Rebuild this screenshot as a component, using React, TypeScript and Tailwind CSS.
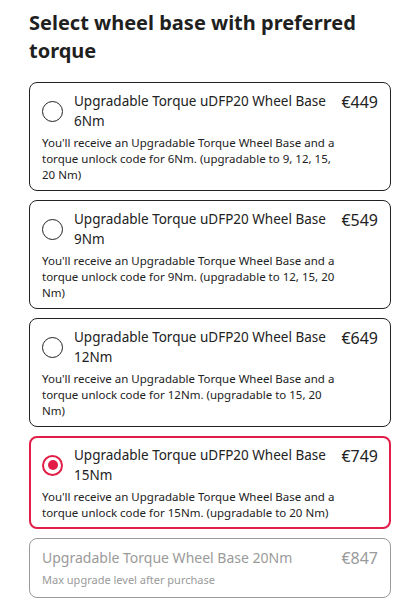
import { useState } from 'react';

interface Option {
  id: string;
  title: string;
  price: string;
  description: string;
  disabled?: boolean;
}

const options: Option[] = [
  {
    id: '6',
    title: 'Upgradable Torque uDFP20 Wheel Base 6Nm',
    price: '€449',
    description: "You'll receive an Upgradable Torque Wheel Base and a torque unlock code for 6Nm. (upgradable to 9, 12, 15, 20 Nm)",
  },
  {
    id: '9',
    title: 'Upgradable Torque uDFP20 Wheel Base 9Nm',
    price: '€549',
    description: "You'll receive an Upgradable Torque Wheel Base and a torque unlock code for 9Nm. (upgradable to 12, 15, 20 Nm)",
  },
  {
    id: '12',
    title: 'Upgradable Torque uDFP20 Wheel Base 12Nm',
    price: '€649',
    description: "You'll receive an Upgradable Torque Wheel Base and a torque unlock code for 12Nm. (upgradable to 15, 20 Nm)",
  },
  {
    id: '15',
    title: 'Upgradable Torque uDFP20 Wheel Base 15Nm',
    price: '€749',
    description: "You'll receive an Upgradable Torque Wheel Base and a torque unlock code for 15Nm. (upgradable to 20 Nm)",
  },
  {
    id: '20',
    title: 'Upgradable Torque Wheel Base 20Nm',
    price: '€847',
    description: 'Max upgrade level after purchase',
    disabled: true,
  },
];

export default function App() {
  const [selected, setSelected] = useState('15');

  return (
    <div className="bg-white min-h-screen pl-[29px] pr-[24px] pt-[9px] pb-4 text-[#222] font-['Noto_Sans',sans-serif]">
      <h1 className="text-[20px] leading-[28px] font-bold text-[#1f1f1f]">
        Select wheel base with preferred torque
      </h1>

      <div className="mt-[17px] flex flex-col gap-[9px]">
        {options.map((opt) => {
          const isSelected = selected === opt.id;

          if (opt.disabled) {
            return (
              <div key={opt.id} className="border border-[#9a9a9a] rounded-lg px-3 pt-[8px] pb-[9px] text-[#9a9a9a]">
                <div className="flex justify-between items-start">
                  <span className="text-[14px] leading-[22px]">{opt.title}</span>
                  <span className="text-[16px] leading-[22px]">{opt.price}</span>
                </div>
                <p className="text-[11px] leading-[16px] mt-[3px]">{opt.description}</p>
              </div>
            );
          }

          return (
            <button
              key={opt.id}
              onClick={() => setSelected(opt.id)}
              className={`text-left rounded-lg ${
                isSelected ? 'border-2 border-[#e11d48] px-[11px] pt-[7px] pb-[6px]' : 'border border-[#222] px-3 pt-[8px] pb-[7px]'
              }`}
            >
              <div className="flex items-center">
                <span
                  className={`w-[21px] h-[21px] rounded-full flex items-center justify-center shrink-0 ${
                    isSelected ? 'border-2 border-[#e11d48]' : 'border-[1.5px] border-[#222]'
                  }`}
                >
                  {isSelected && <span className="w-[10px] h-[10px] rounded-full bg-[#e11d48]" />}
                </span>
                <span className="ml-[11px] flex-1 text-[13.5px] leading-[20px]">{opt.title}</span>
                <span className="ml-2 self-start text-[16px] leading-[22px]">{opt.price}</span>
              </div>
              <p className="mt-[4px] text-[11.5px] leading-[16px] pr-10">{opt.description}</p>
            </button>
          );
        })}
      </div>
    </div>
  );
}
